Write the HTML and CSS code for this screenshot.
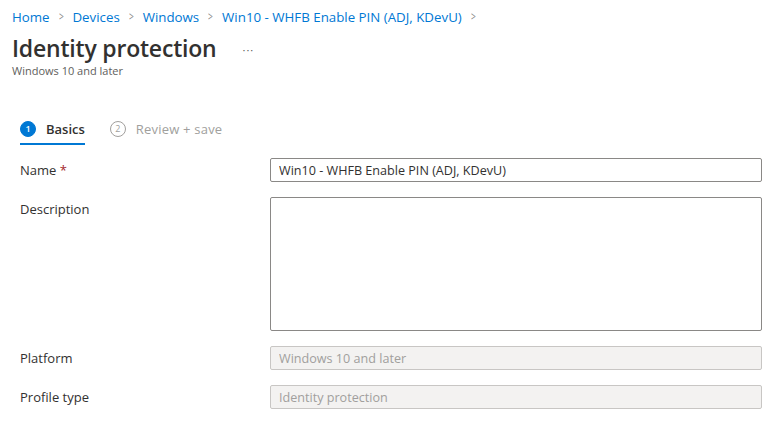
FILE: index.html
```html
<!DOCTYPE html>
<html lang="en">
<head>
    <meta charset="UTF-8">
    <meta name="viewport" content="width=device-width, initial-scale=1.0">
    <title>Identity protection</title>
    <link rel="stylesheet" href="styles.css">
</head>
<body>
    <nav class="breadcrumb">
        <a href="#">Home</a><span class="sep">&gt;</span>
        <a href="#">Devices</a><span class="sep">&gt;</span>
        <a href="#">Windows</a><span class="sep">&gt;</span>
        <a href="#">Win10 - WHFB Enable PIN (ADJ, KDevU)</a><span class="sep">&gt;</span>
    </nav>
    <div class="page-head">
        <h1>Identity protection</h1>
        <span class="more">&middot;&middot;&middot;</span>
    </div>
    <div class="subtitle">Windows 10 and later</div>

    <div class="steps">
        <div class="step active">
            <span class="step-num">1</span>
            <span class="step-label">Basics</span>
        </div>
        <div class="step">
            <span class="step-num">2</span>
            <span class="step-label">Review + save</span>
        </div>
    </div>

    <form class="form">
        <div class="form-row">
            <label>Name <span class="required">*</span></label>
            <input type="text" class="field" value="Win10 - WHFB Enable PIN (ADJ, KDevU)">
        </div>
        <div class="form-row">
            <label>Description</label>
            <textarea class="field area"></textarea>
        </div>
        <div class="form-row">
            <label>Platform</label>
            <input type="text" class="field" value="Windows 10 and later" disabled>
        </div>
        <div class="form-row">
            <label>Profile type</label>
            <input type="text" class="field" value="Identity protection" disabled>
        </div>
    </form>
</body>
</html>
```

FILE: styles.css
```css
* {
    margin: 0;
    padding: 0;
    box-sizing: border-box;
}
body {
    font-family: 'Open Sans', 'Noto Sans', sans-serif;
    color: #323130;
    background: #fff;
    padding: 0 10px 0 12px;
}
.breadcrumb {
    display: flex;
    align-items: center;
    height: 33px;
    font-size: 13.3px;
}
.breadcrumb a {
    color: #0078d4;
    text-decoration: none;
}
.breadcrumb .sep {
    color: #8a8886;
    margin: 0 8px;
    font-size: 12px;
    transform: scaleX(0.7);
}
.page-head {
    display: flex;
    align-items: center;
    height: 30px;
}
h1 {
    font-size: 23px;
    font-weight: 600;
    letter-spacing: -0.2px;
}
.more {
    margin-left: 26px;
    color: #605e5c;
    font-size: 11px;
    letter-spacing: 1px;
    margin-top: 2px;
}
.subtitle {
    font-size: 11px;
    color: #605e5c;
}
.steps {
    display: flex;
    gap: 25px;
    margin: 36px 0 13px 8px;
}
.step {
    display: flex;
    align-items: center;
    gap: 10px;
    height: 31px;
    color: #a19f9d;
    font-size: 13px;
    border-bottom: 2px solid transparent;
}
.step .step-label {
    letter-spacing: 0.2px;
}
.step.active {
    color: #323130;
    font-weight: 600;
    border-bottom-color: #0078d4;
}
.step.active .step-label {
    letter-spacing: 0;
}
.step-num {
    width: 16px;
    height: 16px;
    border-radius: 50%;
    border: 1px solid #a19f9d;
    font-size: 9px;
    font-weight: 400;
    display: flex;
    align-items: center;
    justify-content: center;
}
.step.active .step-num {
    background: #0078d4;
    border-color: #0078d4;
    color: #fff;
    font-weight: 600;
}
.form {
    margin-left: 8px;
    display: flex;
    flex-direction: column;
    gap: 15px;
}
.form-row {
    display: flex;
    align-items: flex-start;
}
.form-row label {
    width: 250px;
    flex-shrink: 0;
    font-size: 13px;
    line-height: 24px;
}
.required {
    color: #a4262c;
}
.field {
    flex: 1;
    height: 24px;
    border: 1px solid #8a8886;
    border-radius: 2px;
    padding: 0 8px;
    font-family: inherit;
    font-size: 12.6px;
    color: #323130;
    background: #fff;
}
.field.area {
    height: 134px;
    resize: none;
}
.field:disabled {
    background: #f3f2f1;
    border-color: #c8c6c4;
    color: #a19f9d;
}
```
